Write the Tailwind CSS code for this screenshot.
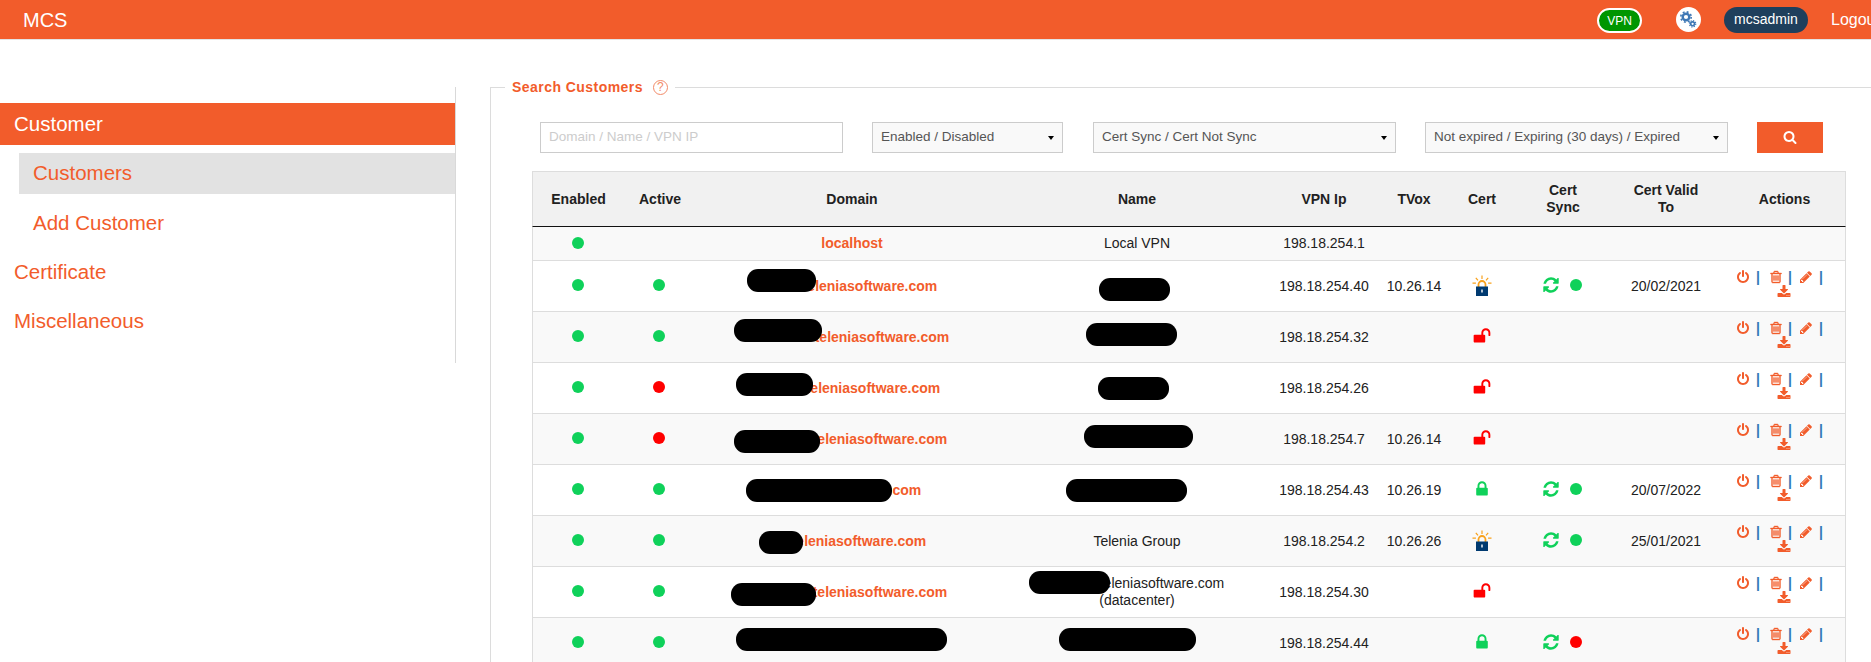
<!DOCTYPE html>
<html lang="en">
<head>
    <meta charset="UTF-8">
    <title>MCS</title>
    <script src="https://cdn.jsdelivr.net/npm/@tailwindcss/browser@4"></script>
</head>
<body class="bg-white text-[#212121] font-['Liberation_Sans',Arial,sans-serif] text-[14px]">
<div class="h-[662px] w-[1871px] overflow-hidden flex flex-col">

    <!-- Top bar -->
    <header class="h-[40px] shrink-0 bg-[#f25c2b] border-b border-[#e3e3e3] flex items-center text-white">
        <span class="ml-[23px] text-[20px] flex-1">MCS</span>
        <span class="w-[45px] h-[25px] mt-[2px] rounded-full bg-[#009600] border-2 border-white text-[12px] flex items-center justify-center">VPN</span>
        <span class="ml-[34px] w-[25px] h-[25px] rounded-full bg-white flex items-center justify-center">
            <svg class="w-[19px] h-[19px]" viewBox="0 0 19 19" fill="none" stroke="#3f78b5">
                <circle cx="7" cy="7" r="3.3" stroke-width="2.4"/>
                <circle cx="7" cy="7" r="5.2" stroke-width="1.6" stroke-dasharray="1.9 2.2"/>
                <circle cx="13.6" cy="13.8" r="1.9" stroke-width="1.6"/>
                <circle cx="13.6" cy="13.8" r="3.2" stroke-width="1.1" stroke-dasharray="1.3 1.2"/>
            </svg>
        </span>
        <span class="ml-[23px] w-[84px] h-[26px] rounded-full bg-[#1f3f5c] flex items-center justify-center">mcsadmin</span>
        <span class="ml-[23px] w-[40px] overflow-hidden whitespace-nowrap text-[16px]">Logout</span>
    </header>

    <div class="flex flex-1 min-h-0">
        <!-- Sidebar -->
        <aside class="w-[456px] shrink-0 h-[276px] mt-[47px] border-r border-[#d9d9d9] pt-[16px] text-[20.5px] text-[#f25c2b]">
            <div class="h-[42px] bg-[#f25c2b] text-white flex items-center pl-[14px]">Customer</div>
            <div class="h-[41px] mt-2 ml-[19px] bg-[#e2e2e2] flex items-center pl-[14px]">Customers</div>
            <div class="h-[41px] mt-2 ml-[19px] flex items-center pl-[14px] pt-[2px]">Add Customer</div>
            <div class="h-[41px] mt-2 flex items-center pl-[14px] pt-[2px]">Certificate</div>
            <div class="h-[41px] mt-2 flex items-center pl-[14px] pt-[2px]">Miscellaneous</div>
        </aside>

        <!-- Search -->
        <main class="flex-1 min-w-0 pl-[34px] pt-[37px]">
            <fieldset class="border-l border-t border-[#dcdcdc] h-[700px]">
                <legend class="ml-[14px] px-[7px] h-[20px] flex items-center text-[#f25c2b] font-bold tracking-[0.45px]">
                    Search Customers
                    <span class="ml-[10px] w-[15px] h-[15px] rounded-full border border-[#f28a68] text-[#f28a68] text-[12px] font-normal tracking-normal flex items-center justify-center">?</span>
                </legend>

                <div class="flex mt-[25px] ml-[49px] h-[31px] text-[13.5px]">
                    <input class="w-[303px] border border-[#ccc] px-[8px] placeholder:text-[#ccc] outline-none" placeholder="Domain / Name / VPN IP">
                    <button class="ml-[29px] w-[191px] border border-[#ccc] bg-[#f9f9f9] text-[#555] pl-[8px] pr-[8px] flex items-center justify-between">Enabled / Disabled<span class="border-x-[3px] border-t-[4px] border-x-transparent border-t-black"></span></button>
                    <button class="ml-[30px] w-[303px] border border-[#ccc] bg-[#f9f9f9] text-[#555] pl-[8px] pr-[8px] flex items-center justify-between">Cert Sync / Cert Not Sync<span class="border-x-[3px] border-t-[4px] border-x-transparent border-t-black"></span></button>
                    <button class="ml-[29px] w-[303px] border border-[#ccc] bg-[#f9f9f9] text-[#555] pl-[8px] pr-[8px] flex items-center justify-between">Not expired / Expiring (30 days) / Expired<span class="border-x-[3px] border-t-[4px] border-x-transparent border-t-black"></span></button>
                    <button class="ml-[29px] w-[66px] bg-[#f25c2b] flex items-center justify-center pb-[2px]">
                        <svg class="w-[14px] h-[14px]" viewBox="0 0 1792 1792" fill="#fff"><path d="M1216 832q0-185-131.5-316.5t-316.5-131.5-316.5 131.5-131.5 316.5 131.5 316.5 316.5 131.5 316.5-131.5 131.5-316.5zm512 832q0 52-38 90t-90 38q-54 0-90-38l-343-342q-179 124-399 124-143 0-273.5-55.5t-225-150-150-225-55.5-273.5 55.5-273.5 150-225 225-150 273.5-55.5 273.5 55.5 225 150 150 225 55.5 273.5q0 220-124 399l343 343q37 37 37 90z"/></svg>
                    </button>
                </div>

                <div id="table-wrap" class="relative ml-[41px] mt-[18px] w-[1314px]">
                    <table class="table-fixed w-[1314px] border-separate border-spacing-0 text-center">
                        <colgroup>
                            <col class="w-[92px]"><col class="w-[72px]"><col class="w-[312px]"><col class="w-[258px]"><col class="w-[116px]"><col class="w-[64px]"><col class="w-[72px]"><col class="w-[90px]"><col class="w-[116px]"><col class="w-[122px]">
                        </colgroup>
                        <thead>
                            <tr class="bg-[#f1f1f1] font-bold">
                                <th class="h-[56px] border-t border-l border-t-[#ddd] border-l-[#ddd] border-b border-b-[#111]">Enabled</th>
                                <th class="border-t border-t-[#ddd] border-b border-b-[#111]">Active</th>
                                <th class="border-t border-t-[#ddd] border-b border-b-[#111]">Domain</th>
                                <th class="border-t border-t-[#ddd] border-b border-b-[#111]">Name</th>
                                <th class="border-t border-t-[#ddd] border-b border-b-[#111]">VPN Ip</th>
                                <th class="border-t border-t-[#ddd] border-b border-b-[#111]">TVox</th>
                                <th class="border-t border-t-[#ddd] border-b border-b-[#111]">Cert</th>
                                <th class="border-t border-t-[#ddd] border-b border-b-[#111] leading-[17px] px-[24px]">Cert Sync</th>
                                <th class="border-t border-t-[#ddd] border-b border-b-[#111] leading-[17px] px-[18px]">Cert Valid To</th>
                                <th class="border-t border-r border-t-[#ddd] border-r-[#ddd] border-b border-b-[#111]">Actions</th>
                            </tr>
                        </thead>
                        <tbody id="rows"></tbody>
                    </table>
                </div>
            </fieldset>
        </main>
    </div>
</div>

<script>
    const GREEN = 'bg-[#0fd15a]';
    const RED = 'bg-[#ff0000]';

    const dot = (color) => `<span class="relative -top-[2px] -left-[1px] inline-block align-middle w-[12px] h-[12px] rounded-full ${color}"></span>`;

    const icons = {
        lock: `<svg class="relative -top-[2px] inline-block w-[18px] h-[18px]" viewBox="0 0 1792 1792" fill="#0fd15a"><path d="M640 768h512v-192q0-106-75-181t-181-75-181 75-75 181v192zm832 96v576q0 40-28 68t-68 28h-960q-40 0-68-28t-28-68v-576q0-40 28-68t68-28h32v-192q0-184 132-316t316-132 316 132 132 316v192h32q40 0 68 28t28 68z"/></svg>`,
        unlock: `<svg class="relative -top-[2px] inline-block w-[18px] h-[18px]" viewBox="0 0 1792 1792" fill="#ff0000"><path d="M1728 576v256q0 26-19 45t-45 19h-64q-26 0-45-19t-19-45v-256q0-106-75-181t-181-75-181 75-75 181v192h96q40 0 68 28t28 68v576q0 40-28 68t-68 28h-960q-40 0-68-28t-28-68v-576q0-40 28-68t68-28h672v-192q0-185 131.5-316.5t316.5-131.5 316.5 131.5 131.5 316.5z"/></svg>`,
        le: `<svg class="inline-block w-[20px] h-[22px]" viewBox="0 0 20 22" fill="none"><path d="M6.5 12V9.5a3.5 3.5 0 0 1 7 0V12" stroke="#f9a11b" stroke-width="1.8"/><path d="M10 0.5v3.5M3.8 2.8l2.2 2.6M16.2 2.8l-2.2 2.6M0.5 8.2h3.4M16.1 8.2h3.4" stroke="#f9a11b" stroke-width="1.2"/><rect x="4" y="11.5" width="12" height="9.5" fill="#003a70"/><rect x="9.3" y="14.5" width="1.4" height="3" fill="#fff"/></svg>`,
        power: `<svg class="w-[14px] h-[14px]" viewBox="0 0 1792 1792" fill="#f25c2b"><path d="M1664 896q0 156-61 298t-164 245-245 164-298 61-298-61-245-164-164-245-61-298q0-182 80.5-343t226.5-270q43-32 95.5-25t83.5 50q32 42 24.5 94.5t-49.5 84.5q-98 74-151.5 181t-53.5 228q0 104 40.5 198.5t109.5 163.5 163.5 109.5 198.5 40.5 198.5-40.5 163.5-109.5 109.5-163.5 40.5-198.5q0-121-53.5-228t-151.5-181q-42-32-49.5-84.5t24.5-94.5q31-43 84-50t95 25q146 109 226.5 270t80.5 343zm-640-768v640q0 52-38 90t-90 38-90-38-38-90v-640q0-52 38-90t90-38 90 38 38 90z"/></svg>`,
        trash: `<svg class="w-[14px] h-[14px]" viewBox="0 0 1792 1792" fill="#f25c2b" stroke="#f25c2b" stroke-width="50"><path d="M704 736v576q0 14-9 23t-23 9h-64q-14 0-23-9t-9-23v-576q0-14 9-23t23-9h64q14 0 23 9t9 23zm256 0v576q0 14-9 23t-23 9h-64q-14 0-23-9t-9-23v-576q0-14 9-23t23-9h64q14 0 23 9t9 23zm256 0v576q0 14-9 23t-23 9h-64q-14 0-23-9t-9-23v-576q0-14 9-23t23-9h64q14 0 23 9t9 23zm128 724v-948h-896v948q0 22 7 40.5t14.5 27 10.5 8.5h832q3 0 10.5-8.5t14.5-27 7-40.5zm-672-1076h448l-48-117q-7-9-17-11h-317q-10 2-17 11zm928 32v64q0 14-9 23t-23 9h-96v948q0 83-47 143.5t-113 60.5h-832q-66 0-113-58.5t-47-141.5v-952h-96q-14 0-23-9t-9-23v-64q0-14 9-23t23-9h309l70-167q15-37 54-63t79-26h320q40 0 79 26t54 63l70 167h309q14 0 23 9t9 23z"/></svg>`,
        pencil: `<svg class="w-[14px] h-[14px]" viewBox="0 0 1792 1792" fill="#f25c2b"><path d="M491 1536l91-91-235-235-91 91v107h128v128h107zm523-928q0-22-22-22-10 0-17 7l-542 542q-7 7-7 17 0 22 22 22 10 0 17-7l542-542q7-7 7-17zm-54-192l416 416-832 832h-416v-416zm683 96q0 53-37 90l-166 166-416-416 166-165q36-38 90-38 53 0 91 38l235 234q37 39 37 91z"/></svg>`,
        download: `<svg class="w-[14px] h-[14px]" viewBox="0 0 1792 1792" fill="#f25c2b"><path d="M1344 1344q0-26-19-45t-45-19-45 19-19 45 19 45 45 19 45-19 19-45zm256 0q0-26-19-45t-45-19-45 19-19 45 19 45 45 19 45-19 19-45zm128-224v320q0 40-28 68t-68 28h-1472q-40 0-68-28t-28-68v-320q0-40 28-68t68-28h465l135 136q58 56 136 56t136-56l136-136h464q40 0 68 28t28 68zm-325-569q17 41-14 70l-448 448q-18 19-45 19t-45-19l-448-448q-31-29-14-70 17-39 59-39h256v-448q0-26 19-45t45-19h256q26 0 45 19t19 45v448h256q42 0 59 39z"/></svg>`,
        refresh: `<svg class="w-[18px] h-[18px]" viewBox="0 0 1792 1792" fill="#0fd15a"><path d="M1639 1056q0 5-1 7-64 268-268 434.5t-478 166.5q-146 0-282.5-55t-243.5-157l-129 129q-19 19-45 19t-45-19-19-45v-448q0-26 19-45t45-19h448q26 0 45 19t19 45-19 45l-137 137q71 66 161 102t187 36q134 0 250-65t186-179q11-17 53-117 8-23 30-23h192q13 0 22.5 9.5t9.5 22.5zm25-800v448q0 26-19 45t-45 19h-448q-26 0-45-19t-19-45 19-45l138-138q-148-137-349-137-134 0-250 65t-186 179q-11 17-53 117-8 23-30 23h-199q-13 0-22.5-9.5t-9.5-22.5v-7q65-268 270-434.5t480-166.5q146 0 284 55.5t245 156.5l130-129q19-19 45-19t45 19 19 45z"/></svg>`
    };

    const pipe = '<span class="w-[4px] text-[#337ab7] font-bold leading-none">|</span>';
    const actions = `
        <div class="relative -top-[1px]">
            <div class="flex items-center h-[15px] pl-[12px]">${icons.power}<span class="ml-[6px] flex">${pipe}</span><span class="ml-[9px] flex">${icons.trash}</span><span class="ml-[5px] flex">${pipe}</span><span class="ml-[7px] flex">${icons.pencil}</span><span class="ml-[6px] flex">${pipe}</span></div>
            <div class="flex justify-center h-[16px] pr-[2px]">${icons.download}</div>
        </div>`;

    // prefix = width of the part of the domain that is blacked out
    const data = [
        { domain: 'localhost', name: 'Local VPN', ip: '198.18.254.1', short: true },
        { active: GREEN, prefix: 36, ip: '198.18.254.40', tvox: '10.26.14', cert: 'le', sync: GREEN, valid: '20/02/2021' },
        { active: GREEN, prefix: 60, ip: '198.18.254.32', cert: 'unlock' },
        { active: RED, prefix: 42, ip: '198.18.254.26', cert: 'unlock' },
        { active: RED, prefix: 56, ip: '198.18.254.7', tvox: '10.26.14', cert: 'unlock' },
        { active: GREEN, prefix: 4, ip: '198.18.254.43', tvox: '10.26.19', cert: 'lock', sync: GREEN, valid: '20/07/2022' },
        { active: GREEN, prefix: 14, name: 'Telenia Group', ip: '198.18.254.2', tvox: '10.26.26', cert: 'le', sync: GREEN, valid: '25/01/2021' },
        { active: GREEN, prefix: 56, dc: true, ip: '198.18.254.30', cert: 'unlock' },
        { active: GREEN, hidden: true, ip: '198.18.254.44', cert: 'lock', sync: RED }
    ];

    // blacked out parts of the picture, page coordinates: x1, y1, x2, y2
    const blobs = [
        [747, 269, 816, 292], [1099, 278, 1170, 301],
        [734, 319, 822, 342], [1086, 323, 1177, 346],
        [736, 373, 813, 396], [1098, 377, 1169, 400],
        [734, 430, 820, 453], [1084, 425, 1193, 448],
        [746, 479, 892, 502], [1066, 479, 1187, 502],
        [759, 531, 803, 554],
        [731, 583, 816, 606], [1029, 571, 1110, 594],
        [736, 628, 947, 651], [1059, 628, 1196, 651]
    ];

    const rows = document.getElementById('rows');
    rows.innerHTML = data.map((r, i) => {
        const bg = i % 2 === 0 ? 'bg-[#f9f9f9]' : 'bg-white';
        let domain = '';
        if (r.domain) domain = r.domain;
        else if (!r.hidden) domain = `<span class="inline-block" style="width:${r.prefix}px"></span>teleniasoftware.com`;
        let name = r.name || '';
        if (r.dc) {
            name = '<span class="block leading-[17px]"><span class="inline-block w-[50px]"></span>teleniasoftware.com</span><span class="block leading-[17px]">(datacenter)</span>';
        }
        const sync = r.sync
            ? `<span class="relative top-[2px] inline-flex items-center gap-[10px] -ml-[3px]">${icons.refresh}<span class="w-[12px] h-[12px] rounded-full ${r.sync}"></span></span>`
            : '';
        return `<tr class="${bg}">
            <td class="${r.short ? 'h-[34px] pt-[2px]' : 'h-[51px]'} border-b border-b-[#ddd] border-l border-l-[#ddd]">${dot(GREEN)}</td>
            <td class="border-b border-b-[#ddd]">${r.active ? dot(r.active) : ''}</td>
            <td class="border-b border-b-[#ddd] font-bold text-[#f25c2b]">${domain}</td>
            <td class="border-b border-b-[#ddd]">${name}</td>
            <td class="border-b border-b-[#ddd]">${r.ip}</td>
            <td class="border-b border-b-[#ddd]">${r.tvox || ''}</td>
            <td class="border-b border-b-[#ddd]">${r.cert ? icons[r.cert] : ''}</td>
            <td class="border-b border-b-[#ddd]">${sync}</td>
            <td class="border-b border-b-[#ddd]">${r.valid || ''}</td>
            <td class="border-b border-b-[#ddd] border-r border-r-[#ddd]">${r.short ? '' : actions}</td>
        </tr>`;
    }).join('');

    const wrap = document.getElementById('table-wrap');
    blobs.forEach(([x1, y1, x2, y2]) => {
        const el = document.createElement('div');
        el.className = 'absolute bg-black rounded-[11px]';
        el.style.left = (x1 - 532) + 'px';
        el.style.top = (y1 - 171) + 'px';
        el.style.width = (x2 - x1) + 'px';
        el.style.height = (y2 - y1) + 'px';
        wrap.appendChild(el);
    });
</script>
</body>
</html>
